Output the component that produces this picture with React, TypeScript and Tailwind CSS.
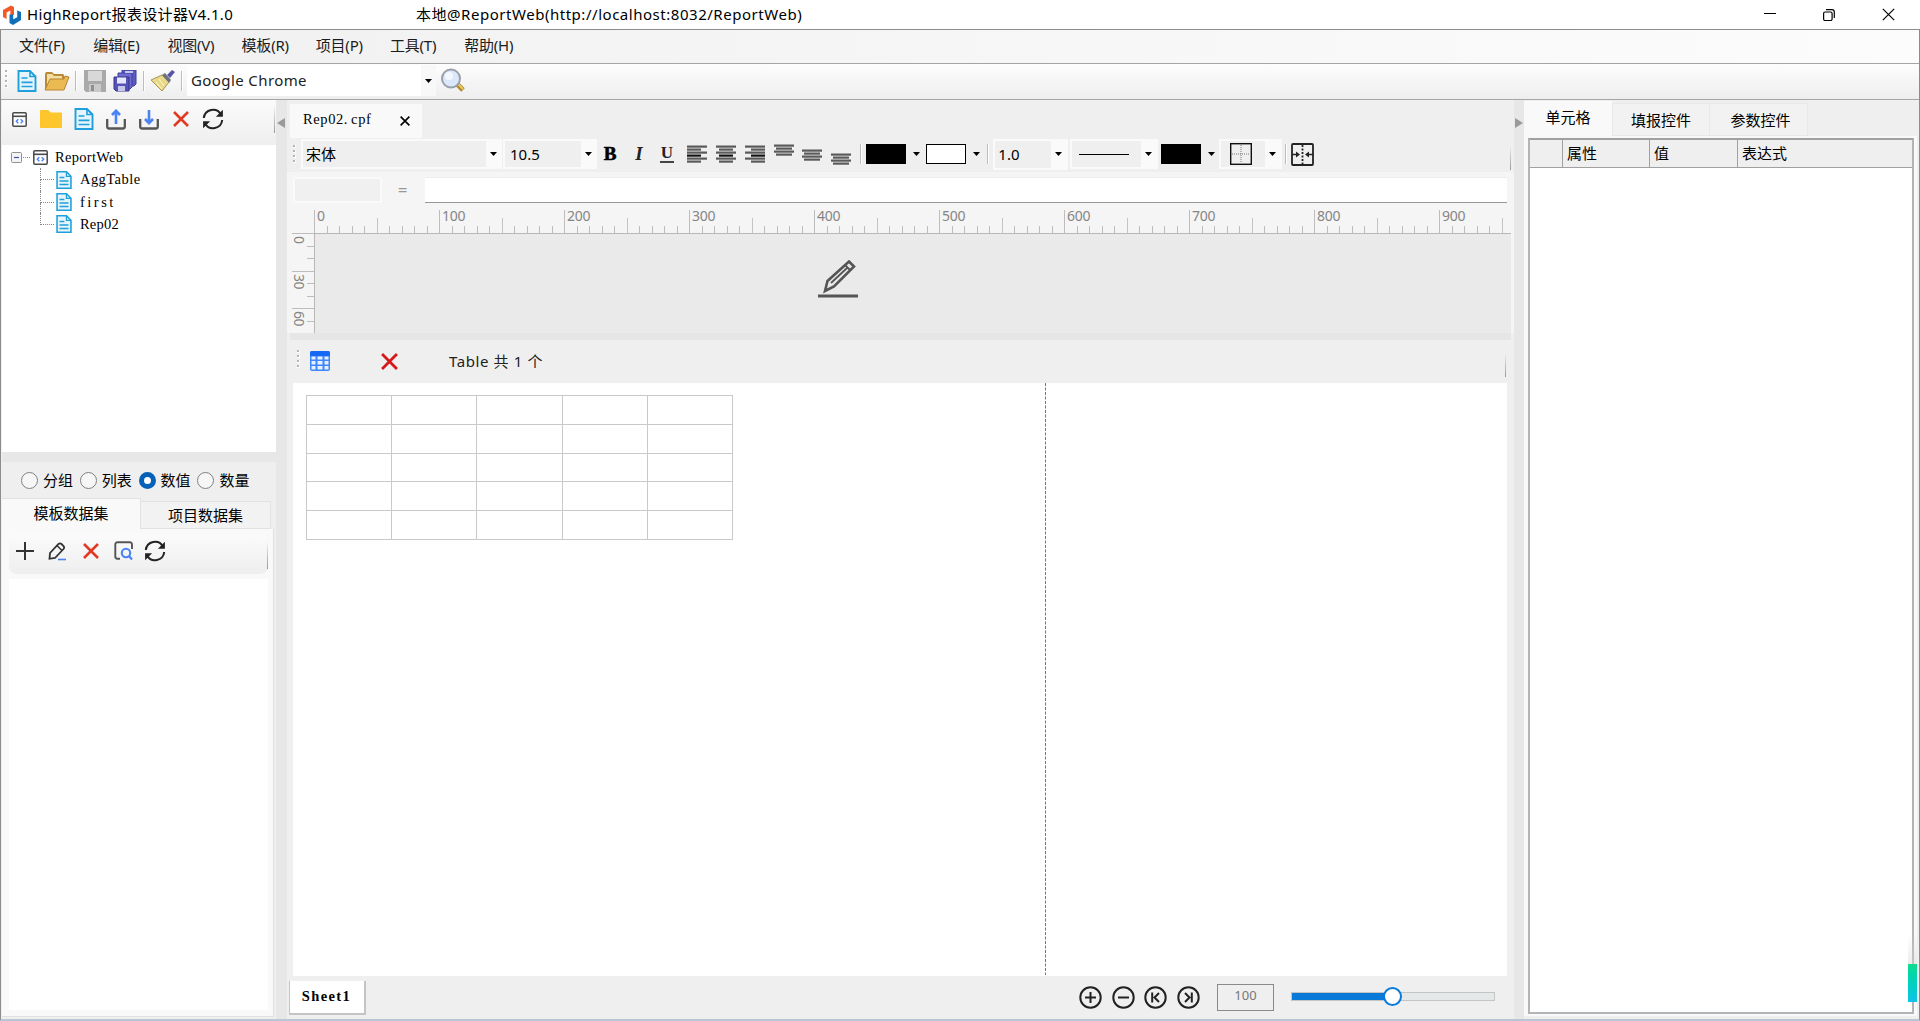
import React from "react";

const SONG = "font-['Liberation_Serif','Noto_Sans_CJK_SC',serif]";
const UI = "font-['Noto_Sans','Noto_Sans_CJK_SC',sans-serif]";

function Grip({ className = "" }: { className?: string }) {
  return (
    <div className={`flex w-[3px] shrink-0 flex-col gap-[2px] ${className}`}>
      {[0, 1, 2, 3].map((i) => (
        <div key={i} className="h-[3px] w-[3px] border-b border-r border-white bg-[#b4b4b4]" />
      ))}
    </div>
  );
}

function Caret({ className = "" }: { className?: string }) {
  return (
    <svg className={`shrink-0 ${className}`} width="7" height="4" viewBox="0 0 7 4">
      <path d="M0 0h7L3.5 4z" fill="#000" />
    </svg>
  );
}

function Sep({ className = "" }: { className?: string }) {
  return <div className={`h-5 w-[2px] shrink-0 border-r border-white bg-[#bdbdbd] ${className}`} />;
}

function DocIcon({ w, h, className = "" }: { w: number; h: number; className?: string }) {
  return (
    <svg className={`shrink-0 ${className}`} width={w} height={h} viewBox="0 0 19 22" fill="none">
      <path d="M1 1h11.5L18 6.5V21H1z" fill="#e6f5fc" stroke="#1f9fdb" strokeWidth="1.9" />
      <path d="M12.5 1v5.5H18" stroke="#1f9fdb" strokeWidth="1.6" />
      <path d="M4 8h6M4 12.3h11M4 16.5h11" stroke="#1f9fdb" strokeWidth="1.7" />
    </svg>
  );
}

function WindowIcon({ className = "" }: { className?: string }) {
  return (
    <svg className={`shrink-0 ${className}`} width="15" height="15" viewBox="0 0 15 15" fill="none">
      <rect x=".8" y=".8" width="13.4" height="13.4" rx="1" fill="#fff" stroke="#4a4a4a" strokeWidth="1.5" />
      <path d="M1 4.3h13" stroke="#4a4a4a" strokeWidth="1.6" />
      <path d="M6.300 7.200L4.300 9.200l2 2M8.700 7.200l2 2-2 2" stroke="#4b83f2" strokeWidth="1.4" />
    </svg>
  );
}

function Cross({ size, color, className = "" }: { size: number; color: string; className?: string }) {
  return (
    <svg className={`shrink-0 ${className}`} width={size} height={size} viewBox="0 0 16 16">
      <path d="M1 1l14 14M15 1L1 15" stroke={color} strokeWidth="2.6" />
    </svg>
  );
}

function Refresh({ className = "" }: { className?: string }) {
  return (
    <svg className={`shrink-0 ${className}`} width="22" height="22" viewBox="0 0 22 22" fill="none">
      <path d="M1.8 10A9.2 9.2 0 0 1 19 6.5M20.2 12A9.2 9.2 0 0 1 3 15.5" stroke="#222" strokeWidth="2" />
      <path d="M20.9 1.8v7h-7zM1.1 20.2v-7h7z" fill="#222" />
    </svg>
  );
}

function TrayIcon({ down = false, className = "" }: { down?: boolean; className?: string }) {
  return (
    <svg className={`shrink-0 ${className}`} width="20" height="21" viewBox="0 0 20 21" fill="none">
      <path d="M1.200 10v7.500a2 2 0 0 0 2 2h13.600a2 2 0 0 0 2-2V10" stroke="#555" strokeWidth="2.300" />
      {down ? (
        <path d="M10 1v13M6 10l4 4.2L14 10" stroke="#4b83f2" strokeWidth="2.6" />
      ) : (
        <path d="M10 15V2M6 6l4-4.2L14 6" stroke="#4b83f2" strokeWidth="2.6" />
      )}
    </svg>
  );
}

function TitleBar() {
  return (
    <div className="flex h-[29px] shrink-0 items-center bg-white text-[15px] text-black">
      <svg className="ml-[3px] shrink-0" width="18" height="20" viewBox="0 0 18 20">
        <path d="M0 5L8 .5 11 2v8H7.3V5.600L3.600 7.600V14L0 12z" fill="#f05a28" />
        <path d="M18 15l-8 5-3.500-2V9.500h3.700v4.800l4-2V5.500L18 7z" fill="#0f6fb8" />
      </svg>
      <div className="ml-[6px] w-[389px] shrink-0 whitespace-nowrap pb-px tracking-[0.340px]">HighReport报表设计器V4.1.0</div>
      <div className="flex-1 whitespace-nowrap pb-px tracking-[0.530px]">本地@ReportWeb(http://localhost:8032/ReportWeb)</div>
      <svg className="mr-[46px]" width="13" height="12" viewBox="0 0 13 12">
        <path d="M0 4.500h12" stroke="#000" />
      </svg>
      <svg className="mr-[47px]" width="12" height="12" viewBox="0 0 12 12" fill="none" stroke="#000" strokeWidth="1.2">
        <rect x=".6" y="3" width="8.500" height="8.500" rx="1.500" />
        <path d="M3 .7h6a2.300 2.300 0 0 1 2.300 2.300v6" />
      </svg>
      <svg className="mb-px mr-[25px]" width="13" height="13" viewBox="0 0 13 13">
        <path d="M.8.800l11.400 11.400M12.200.800L.8 12.200" stroke="#000" strokeWidth="1.200" />
      </svg>
    </div>
  );
}

const MENU = ["文件(F)", "编辑(E)", "视图(V)", "模板(R)", "项目(P)", "工具(T)", "帮助(H)"];

function MenuBar() {
  return (
    <div className="flex h-[35px] shrink-0 items-center border-b border-t border-b-[#a5a5a5] border-t-[#8c8c8c] bg-linear-to-r from-[#f0f0f0] to-[#fcfcfc] pl-[18px] text-[15px] text-[#1c1c1c]">
      {MENU.map((m) => (
        <div key={m} className="w-[74.2px] whitespace-nowrap pb-[3px] tracking-[-0.200px]">
          {m}
        </div>
      ))}
    </div>
  );
}

function MainToolbar() {
  return (
    <div className="flex h-9 shrink-0 items-center border-b border-[#a5a5a5] bg-linear-to-b from-[#fdfdfd] to-[#eeeeee] pb-[2px]">
      <Grip className="ml-[4px] -mt-1" />
      <DocIcon w={20} h={22} className="ml-[9px]" />
      <svg className="ml-[7px] shrink-0" width="26" height="20" viewBox="0 0 26 20">
        <path d="M1 18V3l1-2h6l2 2h9l1 1v5z" fill="#b88a3a" />
        <path d="M3 3h5l2 2h8v4H6l-3 7z" fill="#f3dfa0" />
        <path d="M1 19L6 8h14l1-3 4 1-5 13z" fill="#ecba52" stroke="#b58430" />
      </svg>
      <Sep className="ml-[5px]" />
      <svg className="ml-[7px] shrink-0" width="22" height="22" viewBox="0 0 22 22">
        <path d="M0 0h22v22H2l-2-2z" fill="#a9a9a9" />
        <path d="M4 1h14v10H4z" fill="#d8d8d8" />
        <path d="M5 14h12v8H5z" fill="#c9c9c9" />
        <path d="M7 15h3v6H7z" fill="#8f8f8f" />
      </svg>
      <svg className="ml-[7px] shrink-0" width="24" height="22" viewBox="0 0 24 22">
        <path d="M9 0h14v14l-2 2H9z" fill="#5d5bc0" stroke="#3f3ea0" />
        <path d="M5 3h14v14l-2 2H5z" fill="#6f6dd0" stroke="#3f3ea0" />
        <path d="M1 7h15v14H3l-2-2z" fill="#5553b8" stroke="#36358f" />
        <path d="M4 7.500h9v6H4z" fill="#e6e8fa" />
        <path d="M5 16h7v5H5z" fill="#c5c8ea" />
        <path d="M12 1h8v2h-8z" fill="#c5c8ea" />
      </svg>
      <Sep className="ml-[6px]" />
      <svg className="ml-[5px] shrink-0" width="26" height="22" viewBox="0 0 26 22">
        <path d="M1 10l11-5 7 7-7 9z" fill="#e9d98a" stroke="#a79750" />
        <path d="M12 5l3-2 6 7-2 3z" fill="#6e7180" />
        <path d="M17 5l5-5 3 2-5 6z" fill="#5656a8" />
        <path d="M6 12l6 7M9 9l5 7" stroke="#fff6c8" />
      </svg>
      <Sep className="ml-[5px]" />
      <div className="ml-[4px] flex h-[31px] w-[249px] shrink-0 items-center bg-white pl-[4px] text-[15px] text-[#222]">
        <div className="flex-1 pb-px tracking-[0.400px]">Google Chrome</div>
        <div className="flex h-full w-[15px] items-center bg-[#f8f8f8] pl-[4px]">
          <Caret />
        </div>
      </div>
      <svg className="ml-[5px] shrink-0" width="25" height="25" viewBox="0 0 25 25">
        <path d="M16 16l6 6" stroke="#b08a2e" strokeWidth="5" />
        <path d="M17 16l5 5" stroke="#ecc965" strokeWidth="2" />
        <circle cx="10" cy="10.500" r="9" fill="#dbe8fb" stroke="#9aa0a8" strokeWidth="2" />
        <circle cx="8" cy="8" r="4" fill="#f3f8ff" />
      </svg>
    </div>
  );
}

function TreeLeaf({ label, spacing, last = false }: { label: string; spacing: string; last?: boolean }) {
  return (
    <div className="flex h-[22.400px] items-center">
      <div className="flex h-full w-[14px] flex-col">
        <div className="h-[12px] border-b border-l border-dotted border-[#888]" />
        {!last && <div className="flex-1 border-l border-dotted border-[#888]" />}
      </div>
      <DocIcon w={16} h={18} className="ml-[2px]" />
      <span className={`ml-[8px] ${spacing}`}>{label}</span>
    </div>
  );
}

function ProjectTree() {
  return (
    <div className="flex h-[352px] shrink-0 flex-col">
      <div className="flex h-[45px] shrink-0 items-center rounded-br-lg bg-linear-to-b from-[#fbfbfb] to-[#eeeeee] pb-[7px]">
        <WindowIcon className="ml-[10px]" />
        <svg className="ml-[13px] shrink-0" width="22" height="18" viewBox="0 0 22 18">
          <path d="M0 1q0-1 1-1h7l3 2.500h10q1 0 1 1V17q0 1-1 1H1q-1 0-1-1z" fill="#fdc62c" />
        </svg>
        <DocIcon w={20} h={22} className="ml-[12px]" />
        <TrayIcon className="ml-[12px]" />
        <TrayIcon down className="ml-[13px]" />
        <Cross size={16} color="#e03a25" className="ml-[14px]" />
        <Refresh className="ml-[13px]" />
        <div className="ml-[50px] h-7 w-px bg-linear-to-b from-transparent to-[#999]" />
      </div>
      <div className={`flex-1 bg-white pt-px text-[14.500px] leading-none text-black ${SONG}`}>
        <div className="flex h-[22.400px] items-center">
          <svg className="ml-[9px]" width="20" height="11" viewBox="0 0 20 11">
            <rect x=".5" y=".5" width="10" height="10" rx="1" fill="#f4f4f4" stroke="#919191" />
            <path d="M3 5.500h5" stroke="#3a56a8" strokeWidth="1.200" />
            <path d="M12 5.500h7" stroke="#888" strokeDasharray="1 1" />
          </svg>
          <WindowIcon className="ml-[2px]" />
          <span className="ml-[7px] tracking-[0.300px]">ReportWeb</span>
        </div>
        <div className="ml-[38px]">
          <TreeLeaf label="AggTable" spacing="tracking-[0.450px]" />
          <TreeLeaf label="first" spacing="tracking-[2.500px]" />
          <TreeLeaf label="Rep02" spacing="tracking-[0.200px]" last />
        </div>
      </div>
    </div>
  );
}

function Radio({ label, on = false }: { label: string; on?: boolean }) {
  return (
    <div className="flex w-[58.800px] items-center">
      <div
        className={
          on
            ? "h-[17px] w-[17px] shrink-0 rounded-full border-[5px] border-[#0560b8] bg-white"
            : "h-[17px] w-[17px] shrink-0 rounded-full border border-[#808080] bg-[#f6f6f6]"
        }
      />
      <span className="ml-[5px] whitespace-nowrap">{label}</span>
    </div>
  );
}

function DatasetPanel() {
  return (
    <div className={`flex min-h-0 flex-1 flex-col bg-[#efefef] text-[15px] text-black ${UI}`}>
      <div className="flex h-[36px] shrink-0 items-center pl-[19px]">
        <Radio label="分组" />
        <Radio label="列表" />
        <Radio label="数值" on />
        <Radio label="数量" />
      </div>
      <div className="flex h-[31px] shrink-0 items-end">
        <div className="flex h-[31px] w-[139px] items-center justify-center border-r border-t border-[#e2e2e2] bg-[#f9f9f9] pb-[2px]">
          模板数据集
        </div>
        <div className="flex h-[28px] w-[130px] items-center justify-center border-b border-r border-t border-[#e2e2e2] bg-[#f2f2f2]">
          项目数据集
        </div>
      </div>
      <div className="mb-[2px] mr-[2px] flex flex-1 flex-col border-b border-r border-[#e0e0e0] bg-[#f9f9f9] pb-[6px] pl-[7px] pr-[5px]">
        <div className="mt-[5px] flex h-[40px] items-center rounded-lg bg-linear-to-b from-[#fbfbfb] to-[#eeeeee] pb-[6px]">
          <svg className="ml-[7px]" width="18" height="18" viewBox="0 0 18 18">
            <path d="M9 0v18M0 9h18" stroke="#333" strokeWidth="2" />
          </svg>
          <svg className="ml-[14px]" width="19" height="19" viewBox="0 0 19 19" fill="none">
            <path d="M2 11L10.500 2q1.500-1.300 3 0l2 2q1.300 1.500 0 3L7 16l-5.500.8z" stroke="#333" strokeWidth="1.800" />
            <path d="M9 3.500l5 5" stroke="#333" strokeWidth="1.500" />
            <path d="M10 17.500h8" stroke="#4b83f2" strokeWidth="1.600" />
          </svg>
          <Cross size={16} color="#e03a25" className="ml-[16px]" />
          <svg className="ml-[15px]" width="20" height="20" viewBox="0 0 20 20" fill="none">
            <path d="M18 8V3.500q0-2.200-2.200-2.200H3.500q-2.200 0-2.200 2.200v12q0 2.200 2.200 2.200H6" stroke="#555" strokeWidth="1.900" />
            <circle cx="12" cy="12" r="4.200" stroke="#4b83f2" strokeWidth="2.100" />
            <path d="M15 15l3 3.500" stroke="#4b83f2" strokeWidth="2.100" />
          </svg>
          <Refresh className="ml-[10px]" />
          <div className="ml-auto h-7 w-px translate-y-1 bg-linear-to-b from-transparent to-[#999]" />
        </div>
        <div className="mt-[5px] flex-1 bg-white" />
      </div>
    </div>
  );
}

function Splitter({ dir }: { dir: "left" | "right" }) {
  return (
    <div className={`shrink-0 bg-[#e7e7e7] pt-[18px] ${dir === "left" ? "w-[11px]" : "w-[10px]"}`}>
      <svg width="9" height="10" viewBox="0 0 9 10">
        <path d={dir === "left" ? "M9 0v10L1 5z" : "M1 0v10l8-5z"} fill="#9a9a9a" />
      </svg>
    </div>
  );
}

const ALIGN: { y: number; rows: [number, number][] }[] = [
  { y: 0, rows: [[0, 20], [0, 14], [0, 20], [0, 14], [0, 20], [0, 14]] },
  { y: 0, rows: [[0, 20], [3, 14], [0, 20], [3, 14], [0, 20], [3, 14]] },
  { y: 0, rows: [[0, 20], [6, 14], [0, 20], [6, 14], [0, 20], [6, 14]] },
  { y: -1, rows: [[0, 20], [2, 16], [0, 20], [2, 16]] },
  { y: 4, rows: [[0, 20], [2, 16], [0, 20], [2, 16]] },
  { y: 8, rows: [[0, 20], [2, 16], [0, 20], [2, 16]] },
];

function AlignIcon({ index }: { index: number }) {
  const a = ALIGN[index];
  return (
    <svg className="ml-[8.900px] shrink-0" width="20" height="21" viewBox="0 0 20 21">
      {a.rows.map(([x, w], i) => (
        <rect key={i} x={x} y={1.500 + a.y + i * 3} width={w} height="2.200" fill={i === 3 && index < 3 ? "#111" : "#5a5a5a"} />
      ))}
    </svg>
  );
}

function FormatToolbar() {
  return (
    <div className={`flex h-[34px] shrink-0 items-center bg-[#efefef] pb-[2px] text-[15px] text-black ${UI}`}>
      <Grip className="ml-[6px]" />
      <div className="ml-[5px] flex h-[30px] w-[201px] shrink-0 items-center border-2 border-[#fafafa] pl-[3px]">
        <span className="flex-1">宋体</span>
        <div className="flex h-full w-[14px] items-center bg-[#fafafa] pl-[4px]">
          <Caret />
        </div>
      </div>
      <div className="ml-px flex h-[30px] w-[94px] shrink-0 items-center border-2 border-[#fafafa] pl-[5px]">
        <span className="flex-1">10.5</span>
        <div className="flex h-full w-[14px] items-center bg-[#fafafa] pl-[4px]">
          <Caret />
        </div>
      </div>
      <div className={`flex text-[19px] font-bold leading-[20px] text-[#222] ${SONG}`}>
        <span className="ml-[6px] w-[14px] text-center text-black [-webkit-text-stroke:0.600px_#000]">B</span>
        <span className="ml-[15px] w-[14px] text-center italic">I</span>
        <span className="ml-[14px] h-[19px] w-[14px] border-b-2 border-[#444] text-center text-[17px] leading-[18px]">U</span>
      </div>
      <div className="ml-[4px] flex">
        {[0, 1, 2, 3, 4, 5].map((i) => (
          <AlignIcon key={i} index={i} />
        ))}
      </div>
      <Sep className="ml-[9px]" />
      <div className="ml-[4px] h-[20px] w-[40px] bg-black" />
      <Caret className="ml-[7px]" />
      <div className="ml-[6px] h-[20px] w-[40px] border border-black bg-white" />
      <Caret className="ml-[7px]" />
      <Sep className="ml-[7px]" />
      <div className="ml-[4px] flex h-[31px] w-[75px] shrink-0 items-center border-2 border-[#fafafa] pl-[3px]">
        <span className="flex-1">1.0</span>
        <div className="flex h-full w-[15px] items-center bg-[#fafafa] pl-[4px]">
          <Caret />
        </div>
      </div>
      <div className="ml-[2px] flex h-[30px] w-[88px] shrink-0 items-center border-2 border-[#fafafa] pl-[7px]">
        <div className="h-px w-[50px] bg-black" />
        <div className="ml-auto flex h-full w-[15px] items-center bg-[#fafafa] pl-[4px]">
          <Caret />
        </div>
      </div>
      <div className="ml-[3px] h-[20px] w-[40px] bg-black" />
      <Caret className="ml-[7px]" />
      <div className="ml-[4px] flex h-[30px] w-[63px] shrink-0 items-center border-2 border-[#fafafa] pl-[9px]">
        <svg width="22" height="22" viewBox="0 0 22 22" fill="none">
          <rect x=".7" y=".7" width="20.600" height="20.600" stroke="#111" strokeWidth="1.400" />
          <path d="M11 2v18M2 11h18" stroke="#777" strokeDasharray="1 1" />
        </svg>
        <div className="ml-auto flex h-full w-[15px] items-center bg-[#fafafa] pl-[4px]">
          <Caret />
        </div>
      </div>
      <Sep className="ml-[3px]" />
      <svg className="ml-[4px] shrink-0" width="23" height="23" viewBox="0 0 23 23" fill="none">
        <rect x="1" y="1" width="21" height="21" rx="1" stroke="#222" strokeWidth="1.800" />
        <path d="M11.500 2v19" stroke="#222" strokeWidth="1.800" strokeDasharray="2 1.500" />
        <path d="M1 11.500h5M22 11.500h-5" stroke="#222" strokeWidth="1.600" />
        <path d="M5 8.500l4 3-4 3zM18 8.500l-4 3 4 3z" fill="#222" />
      </svg>
      <div className="ml-auto mr-[3px] h-6 w-px translate-y-1 bg-linear-to-b from-transparent to-[#999]" />
    </div>
  );
}

const MAJORS = [0, 1, 2, 3, 4, 5, 6, 7, 8, 9];
const CELLS = [0, 1, 2, 3, 4, 5, 6, 7, 8, 9];

function HorizontalRuler() {
  return (
    <div className="ml-[27px] mr-[3px] flex h-[24px] shrink-0 items-end overflow-hidden">
      {MAJORS.map((m) => (
        <div key={m} className="relative flex h-full w-[125px] shrink-0 items-end">
          {CELLS.map((c) => (
            <div
              key={c}
              className={
                c === 0
                  ? "h-[23px] w-[12.500px] border-l border-[#bdbdbd]"
                  : c === 5
                    ? "h-[15px] w-[12.500px] border-l border-[#c4c4c4]"
                    : "h-[7px] w-[12.500px] border-l border-[#bdbdbd]"
              }
            />
          ))}
          <span className="absolute left-[3px] top-0 text-[14px] leading-[14px] tracking-[-0.300px] text-[#858585]">
            {m * 100}
          </span>
        </div>
      ))}
    </div>
  );
}

function VerticalRuler() {
  return (
    <div className="flex w-[25px] shrink-0 flex-col overflow-hidden border-r border-[#b8b8b8] bg-[#f5f5f5]">
      {["0", "30", "60"].map((l) => (
        <div key={l} className="relative flex h-[37.500px] shrink-0 flex-col items-end">
          <div className="h-[12.500px] w-[22px] border-t border-[#bdbdbd]" />
          <div className="h-[12.500px] w-[7px] border-t border-[#bdbdbd]" />
          <div className="h-[12.500px] w-[7px] border-t border-[#bdbdbd]" />
          <span className="absolute left-[2px] top-[3px] text-[14px] leading-[15px] tracking-[-0.500px] text-[#858585] [writing-mode:vertical-rl]">
            {l}
          </span>
        </div>
      ))}
    </div>
  );
}

function ReportHeaderArea() {
  return (
    <div className={`flex h-[161px] shrink-0 flex-col bg-[#f5f5f5] ${UI}`}>
      <div className="flex h-[37px] shrink-0 items-start pt-[5px]">
        <div className="ml-[6px] h-[26px] w-[89px] border-2 border-[#fafafa] bg-[#f0f0f0]" />
        <span className="ml-[14px] w-[13px] text-center text-[17px] leading-[25px] text-[#999]">=</span>
        <div className="ml-[16px] mr-[7px] h-[26px] flex-1 border-b border-t border-b-[#979797] border-t-[#ececec] bg-white" />
      </div>
      <HorizontalRuler />
      <div className="flex min-h-0 flex-1 pl-[3px] pr-[3px]">
        <VerticalRuler />
        <div className="flex-1 border-t border-[#b8b8b8] bg-[#eaeaea]">
          <svg className="ml-[503px] mt-[26px]" width="41" height="38" viewBox="0 0 41 38" fill="none" stroke="#555">
            <path d="M7 31l2.500-10L31 1.500l5 5-20 20z" strokeWidth="2.600" />
            <path d="M27 5l5.500 5.500M13 23L29 8" strokeWidth="1.800" />
            <path d="M0 36h40" strokeWidth="3" />
          </svg>
        </div>
      </div>
    </div>
  );
}

function Sheet() {
  return (
    <div className="ml-[6px] mr-[7px] flex min-h-0 flex-1 bg-white">
      <div className="ml-[13px] mt-[12px] grid h-[145px] w-[427px] grid-cols-5 grid-rows-5 border-l border-t border-[#c9c9c9]">
        {Array.from({ length: 25 }, (_, i) => (
          <div key={i} className="border-b border-r border-[#c9c9c9]" />
        ))}
      </div>
      <svg className="ml-[312px] h-full" width="2" height="592">
        <path d="M.5 0v592" stroke="#777" strokeDasharray="3 1.500" />
      </svg>
    </div>
  );
}

function RoundIcon({ d }: { d: string }) {
  return (
    <svg className="mr-[9.500px] shrink-0" width="23" height="23" viewBox="0 0 23 23" fill="none" stroke="#222">
      <circle cx="11.500" cy="11.500" r="10.200" strokeWidth="2" />
      <path d={d} strokeWidth="2" />
    </svg>
  );
}

function SheetFooter() {
  return (
    <div className="flex h-[43px] shrink-0 bg-[#efefef]">
      <div
        className={`ml-[2px] mt-[5px] flex h-[34px] w-[77px] items-center justify-center border-b-2 border-l border-r-2 border-[#c4c4c4] bg-white pb-px pr-px text-[14.500px] font-bold tracking-[1.400px] text-black ${SONG}`}
      >
        Sheet1
      </div>
      <div className="ml-[713px] mt-[10px] flex h-[23px] items-center">
        <RoundIcon d="M11.500 6v11M6 11.500h11" />
        <RoundIcon d="M6 11.500h11" />
        <RoundIcon d="M8.200 6.500v10M15 7l-4.500 4.500L15 16" />
        <RoundIcon d="M14.800 6.500v10M8 7l4.500 4.500L8 16" />
      </div>
      <div className={`ml-[8px] mt-[8px] h-[27px] w-[57px] border border-[#8a8a8a] text-center text-[13px] leading-[20px] text-[#777] ${UI}`}>
        100
      </div>
      <div className="relative ml-[17px] mt-[16px] h-[9px] w-[204px] border border-[#c4c4c4] bg-[#e4e8e9]">
        <div className="h-full w-[101px] bg-[#0a7ad9]" />
        <div className="absolute left-[91px] top-[-6px] h-[19px] w-[19px] rounded-full border-2 border-[#0a7ad9] bg-white" />
      </div>
    </div>
  );
}

function Designer() {
  return (
    <div className="flex min-w-0 flex-1 flex-col bg-[#efefef]">
      <div className="flex h-[38px] shrink-0 items-end">
        <div className={`ml-[3px] flex h-[34px] w-[132px] items-center bg-[#f9f9f9] pl-[13px] text-[14.500px] text-black ${SONG}`}>
          <span className="w-[97px] pb-[3px] tracking-[0.600px]">
            Rep02.<span className="ml-[3px]">cpf</span>
          </span>
          <Cross size={10} color="#000" />
        </div>
      </div>
      <FormatToolbar />
      <ReportHeaderArea />
      <div className="ml-[3px] mr-[3px] h-[7px] shrink-0 bg-[#e6e6e6]" />
      <div className={`flex h-[43px] shrink-0 items-center pb-px text-[15px] text-[#222] ${UI}`}>
        <Grip className="-mt-1 ml-[10px]" />
        <svg className="ml-[10px] shrink-0" width="20" height="20" viewBox="0 0 20 20">
          <rect width="20" height="20" rx="2" fill="#3d86fb" />
          <path d="M0 5V2q0-2 2-2h16q2 0 2 2v3z" fill="#1668f5" />
          <path
            d="M1.500 5.500h4v3h-4zM7.500 5.500h5v3h-5zM14.500 5.500h4v3h-4zM1.500 10h4v3.500h-4zM7.500 10h5v3.500h-5zM14.500 10h4v3.500h-4zM1.500 15h4v3.500h-4zM7.500 15h5v3.500h-5zM14.500 15h4v3.500h-4z"
            fill="#e6f0ff"
          />
        </svg>
        <Cross size={17} color="#d51818" className="ml-[51px]" />
        <span className="ml-[51px] whitespace-nowrap tracking-[0.600px]">Table 共 1 个</span>
        <div className="ml-auto mr-[8px] h-6 w-px translate-y-1 bg-linear-to-b from-transparent to-[#999]" />
      </div>
      <Sheet />
      <SheetFooter />
    </div>
  );
}

function PropertyPanel() {
  return (
    <div className={`flex w-[395px] shrink-0 flex-col bg-[#efefef] text-[15px] text-black ${UI}`}>
      <div className="flex h-[36px] shrink-0 items-end">
        <div className="flex h-[35px] w-[88px] items-center justify-center bg-[#f9f9f9] pb-[2px]">单元格</div>
        <div className="flex h-[33px] w-[98px] items-center justify-center border border-[#e8e8e8] bg-[#f2f2f2] pt-px">填报控件</div>
        <div className="flex h-[33px] w-[98px] items-center justify-center border border-l-0 border-[#e8e8e8] bg-[#f2f2f2] pl-1 pt-px">参数控件</div>
      </div>
      <div className="mb-[3px] mr-[2px] flex flex-1 bg-[#f9f9f9] pb-[2px] pl-[4px] pr-[3px] pt-[2px]">
        <div className="relative flex flex-1 flex-col border-2 border-[#b2b5b8] border-t-[#a0a0a0] bg-white">
          <div className="flex h-[28px] items-center border-b border-[#a0a0a0] bg-[#efefef]">
            <div className="h-full w-[33px] border-r border-[#a0a0a0]" />
            <div className="flex h-full w-[87px] items-center border-r border-[#a0a0a0] pl-[4px]">属性</div>
            <div className="flex h-full w-[88px] items-center border-r border-[#a0a0a0] pl-[4px]">值</div>
            <div className="flex h-full items-center pl-[4px]">表达式</div>
          </div>
          <div className="absolute bottom-[10px] right-[-5px] h-[68px] w-[9px] bg-linear-to-b from-transparent to-[#d5d5d5]" />
          <div className="absolute bottom-[10px] right-[-5px] h-[38px] w-[9px] bg-linear-to-b from-[#10dc8c] to-[#12c3ea]" />
        </div>
      </div>
    </div>
  );
}

export default function App() {
  return (
    <div className={`flex h-[1021px] w-[1920px] flex-col overflow-hidden bg-white ${UI}`}>
      <TitleBar />
      <div className="flex min-h-0 flex-1 flex-col border-b-2 border-l border-r border-b-[#b9c6d6] border-l-[#8c8c8c] border-r-[#8c8c8c]">
        <MenuBar />
        <MainToolbar />
        <div className="flex min-h-0 flex-1">
          <div className="flex w-[275px] shrink-0 flex-col bg-[#efefef] pl-px">
            <ProjectTree />
            <div className="h-[10px] shrink-0 bg-[#e7e7e7]" />
            <DatasetPanel />
          </div>
          <Splitter dir="left" />
          <Designer />
          <Splitter dir="right" />
          <PropertyPanel />
        </div>
      </div>
    </div>
  );
}
